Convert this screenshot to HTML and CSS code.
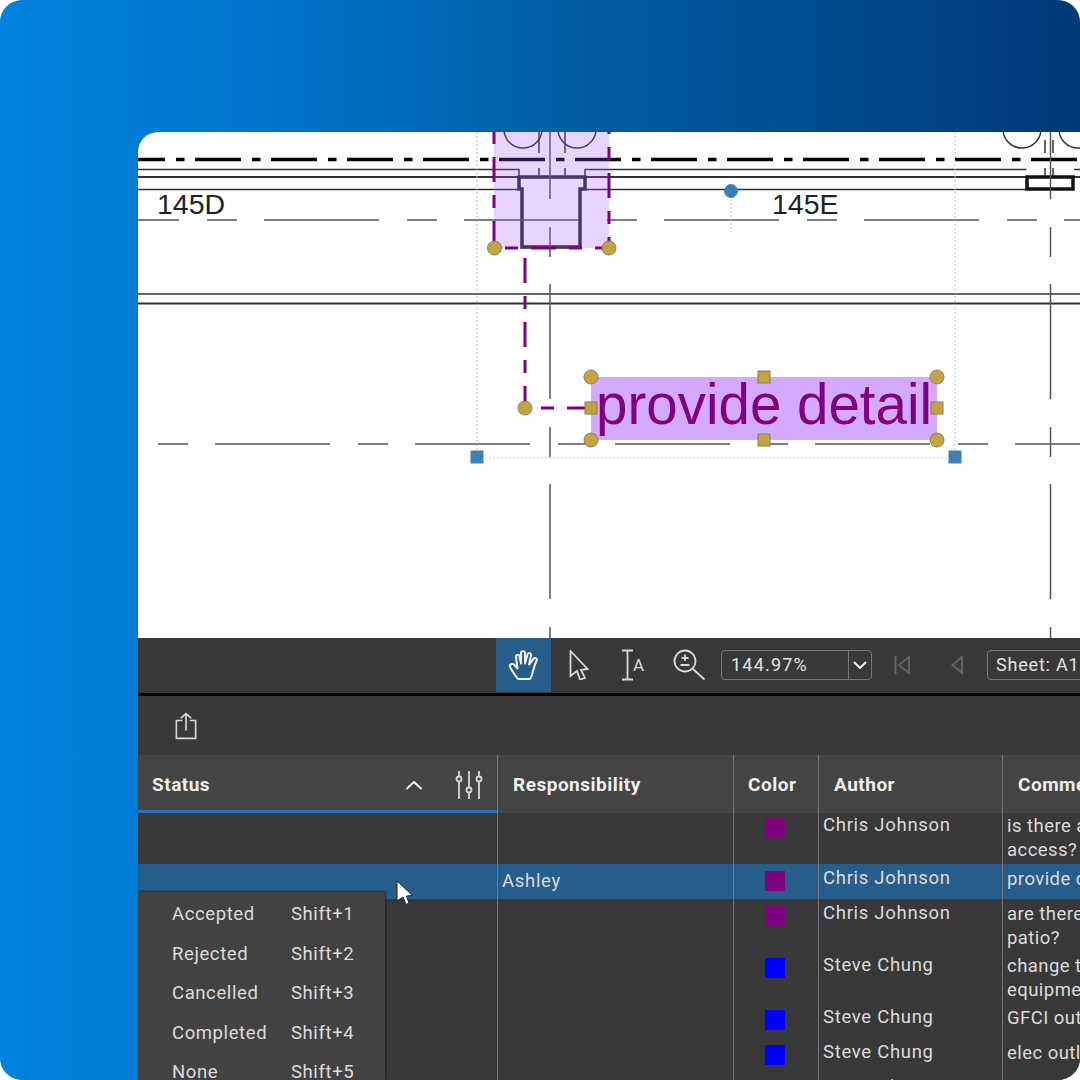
FILE: index.html
```html
<!DOCTYPE html>
<html lang="en-US">
<head>
  <meta charset="UTF-8">
  <title>Markup list</title>
  <link rel="stylesheet" href="styles.css">
</head>
<body>
<div class="frame">
  <div class="window">

    <!-- the drawing: viewBox uses page coordinates -->
    <svg class="drawing" viewBox="138 132 942 506">
      <g class="thin">
        <path d="M138 169.500H519V177M585 177V169.500H1026.500M1074 169.500H1080"/>
        <path d="M138 189.500H519M585 189.500H1026"/>
        <path d="M138 294H1080"/>
        <path d="M539 132V153M565 132V153M539 168V176M565 168V176M1045 140V153M1053 140V153M1045 168V176M1053 168V176"/>
        <circle cx="523" cy="129" r="19"/>
        <circle cx="577" cy="129" r="19"/>
        <circle cx="1022" cy="129" r="19"/>
        <circle cx="1078" cy="129" r="19"/>
      </g>
      <path class="thick-chain" d="M119 159.500H1080"/>
      <path class="mid" d="M138 177H519M585 177H1026M1074 177H1080M138 303.500H1080"/>
      <path class="wall" d="M519 177V189H522V247H580V189H585V177Z"/>
      <path class="wall-black" d="M1027 177H1073V189H1027Z"/>
      <g class="grid-line">
        <path d="M64 220H1080"/>
        <path d="M15 444H1080"/>
        <path d="M550 84V638"/>
        <path d="M1050.500 84V638"/>
      </g>
      <text class="room" x="157" y="214">145D</text>
      <text class="room" x="772" y="214">145E</text>

      <rect class="cloud-fill" x="494" y="132" width="115" height="116"/>
      <path class="cloud-line" d="M609 109V248H494V132"/>
      <path class="cloud-line" d="M525 258V408H590"/>

      <g class="guide-grey"><path d="M477 132V457"/></g>
      <g class="guide-blue"><path d="M955 132V457M731 191V232"/></g>
      <path class="guide-dots" d="M477 458H955"/>

      <rect class="label-fill" x="591" y="377" width="346" height="63"/>
      <text class="label-text" x="596" y="424">provide detail</text>

      <g class="handle">
        <circle cx="494.500" cy="248" r="7"/>
        <circle cx="609" cy="248" r="7"/>
        <circle cx="525" cy="408" r="7"/>
        <circle cx="591" cy="377" r="7"/>
        <circle cx="591" cy="440" r="7"/>
        <circle cx="937" cy="377" r="7"/>
        <circle cx="937" cy="440" r="7"/>
        <rect x="585" y="402" width="12" height="12"/>
        <rect x="758" y="371" width="12" height="12"/>
        <rect x="758" y="434" width="12" height="12"/>
        <rect x="931" y="402" width="12" height="12"/>
      </g>
      <g class="handle-blue">
        <circle cx="731" cy="191" r="6.500"/>
        <rect x="471" y="451" width="12" height="12"/>
        <rect x="949" y="451" width="12" height="12"/>
      </g>
    </svg>

    <div class="toolbar">
      <div class="tool tool-active">
        <svg width="32" height="34" viewBox="0 0 32 34" class="ico">
          <path d="M10 31C7 27 3 22 2 18.500C1.500 16 4.500 15 6.500 17L9.500 20.500L8 9C7.700 6.500 11 6 11.500 8.500L13 15.500V5C13 2.500 17 2.500 17 5V15.500L19.500 6.500C20 4 23.500 5 23 7.500L21 16.500L25.500 11C27 9 30 10.500 28.500 13C26.500 17 25.500 21 24.500 25C24 28 23 29.500 22 31Z"/>
        </svg>
      </div>
      <div class="tool tool-pointer">
        <svg width="20" height="30" viewBox="0 0 20 30" class="ico-thin">
          <path d="M1.500 1L18.500 19L12 20L16 28L11 29.500L8 21L1.500 26Z"/>
        </svg>
      </div>
      <div class="tool tool-text">
        <svg width="26" height="32" viewBox="0 0 26 32" class="ico-thin">
          <path d="M1 1.500H12M1 30.500H12M6.500 1.500V30.500"/>
          <text class="ico-letter" x="12" y="22">A</text>
        </svg>
      </div>
      <div class="tool tool-zoom">
        <svg width="33" height="32" viewBox="0 0 33 32" class="ico-thin">
          <circle cx="12" cy="12" r="10.500"/>
          <path d="M20 20L31.500 30.500M12 5.500V12M8.500 9H15.500M7.500 16H16.500"/>
        </svg>
      </div>
      <div class="combo">
        <span class="combo-value">144.97%</span>
        <span class="combo-arrow">
          <svg width="14" height="9" viewBox="0 0 14 9" class="ico"><path d="M1.500 1.500L7 7L12.500 1.500"/></svg>
        </span>
      </div>
      <svg class="nav-first ico-dim" width="16" height="20" viewBox="0 0 16 20">
        <path d="M1.500 1V19M15 2L5 10L15 18Z"/>
      </svg>
      <svg class="nav-prev ico-dim" width="12" height="20" viewBox="0 0 12 20">
        <path d="M11 2L1.500 10L11 18Z"/>
      </svg>
      <div class="sheet">Sheet: A1</div>
    </div>

    <div class="divider"></div>

    <div class="actions">
      <svg width="22" height="28" viewBox="0 0 24 30" class="ico-thin">
        <path d="M8 9H1.500V28.500H22.500V9H16M12 20V1.500M6.500 6.500L12 1.500L17.500 6.500"/>
      </svg>
    </div>

    <div class="table">
      <div class="row head">
        <div class="cell cell-status">
          <span>Status</span>
          <svg class="sort-up ico" width="16" height="10" viewBox="0 0 16 10"><path d="M1 8.500L8 2L15 8.500"/></svg>
          <svg class="filter ico-thin" width="28" height="28" viewBox="0 0 28 28">
            <path d="M4 0V5.500M4 10.500V28M14 0V16.500M14 21.500V28M24 0V5.500M24 10.500V28"/>
            <circle cx="4" cy="8" r="2.500"/>
            <circle cx="14" cy="19" r="2.500"/>
            <circle cx="24" cy="8" r="2.500"/>
          </svg>
        </div>
        <div class="cell">Responsibility</div>
        <div class="cell cell-color">Color</div>
        <div class="cell">Author</div>
        <div class="cell">Comments</div>
      </div>

      <div class="row row-first">
        <div class="cell"></div>
        <div class="cell"></div>
        <div class="cell"><i class="swatch purple"></i></div>
        <div class="cell">Chris Johnson</div>
        <div class="cell note">is there any<br>access?</div>
      </div>
      <div class="row row-short row-selected">
        <div class="cell"></div>
        <div class="cell person">Ashley</div>
        <div class="cell"><i class="swatch purple"></i></div>
        <div class="cell">Chris Johnson</div>
        <div class="cell note">provide detail</div>
      </div>
      <div class="row">
        <div class="cell"></div>
        <div class="cell"></div>
        <div class="cell"><i class="swatch purple"></i></div>
        <div class="cell">Chris Johnson</div>
        <div class="cell note">are there any<br>patio?</div>
      </div>
      <div class="row">
        <div class="cell"></div>
        <div class="cell"></div>
        <div class="cell"><i class="swatch blue"></i></div>
        <div class="cell">Steve Chung</div>
        <div class="cell note">change the<br>equipment</div>
      </div>
      <div class="row row-short">
        <div class="cell"></div>
        <div class="cell"></div>
        <div class="cell"><i class="swatch blue"></i></div>
        <div class="cell">Steve Chung</div>
        <div class="cell note">GFCI outlet</div>
      </div>
      <div class="row row-short">
        <div class="cell"></div>
        <div class="cell"></div>
        <div class="cell"><i class="swatch blue"></i></div>
        <div class="cell">Steve Chung</div>
        <div class="cell note">elec outlet</div>
      </div>
      <div class="row">
        <div class="cell"></div>
        <div class="cell"></div>
        <div class="cell"><i class="swatch blue"></i></div>
        <div class="cell">Steve Chung</div>
        <div class="cell note">add outlet</div>
      </div>
    </div>

    <ul class="menu">
      <li><span>Accepted</span><span>Shift+1</span></li>
      <li><span>Rejected</span><span>Shift+2</span></li>
      <li><span>Cancelled</span><span>Shift+3</span></li>
      <li><span>Completed</span><span>Shift+4</span></li>
      <li><span>None</span><span>Shift+5</span></li>
    </ul>

    <svg class="cursor" width="18" height="26" viewBox="0 0 18 26">
      <path d="M1 1L16.500 15.500L10.500 16L13 23L10 24.500L7 17L1 21Z"/>
    </svg>
  </div>
</div>
</body>
</html>
```

FILE: styles.css
```css
html, body {
  margin: 0;
  padding: 0;
  background: #fff;
}

.frame {
  width: 1080px;
  height: 1080px;
  box-sizing: border-box;
  padding: 132px 0 0 138px;
  border-radius: 22px;
  overflow: hidden;
  background: linear-gradient(90deg, #0082de 0%, #007ad2 18%, #00589c 60%, #003a78 100%);
  font-family: Roboto, "Liberation Sans", sans-serif;
}

.window {
  position: relative;
  width: 942px;
  height: 948px;
  border-top-left-radius: 20px;
  overflow: hidden;
  background: #383838;
}

/* drawing */

.drawing {
  display: block;
  width: 942px;
  height: 506px;
  background: #fff;
}
.drawing path, .drawing circle {
  fill: none;
}
.thin path, .thin circle {
  stroke: #333;
  stroke-width: 1.500;
}
.thick-chain {
  stroke: #000;
  stroke-width: 3.500;
  stroke-dasharray: 46 11 8.500 10.500;
}
.mid {
  stroke: #333;
  stroke-width: 2;
}
.drawing .wall {
  stroke: #2a2a2a;
  stroke-width: 3.500;
}
.drawing .wall-black {
  stroke: #111;
  stroke-width: 3.500;
}
.grid-line path {
  stroke: #555;
  stroke-width: 1.500;
  stroke-dasharray: 115 28 30 27;
}
.room {
  font-family: "Liberation Sans", Arial, sans-serif;
  font-size: 28.500px;
  fill: #222;
}
.cloud-fill {
  fill: #a855ff;
  opacity: .25;
}
.cloud-line {
  stroke: #800080;
  stroke-width: 3;
  stroke-dasharray: 25 13 13 13;
}
.guide-grey path {
  stroke: #bbb;
  stroke-width: 1;
  stroke-dasharray: 2 2;
}
.guide-blue path {
  stroke: #a5cfe6;
  stroke-width: 1;
  stroke-dasharray: 2 2;
}
.guide-dots {
  stroke: #ccc;
  stroke-width: 1;
  stroke-dasharray: 2 2;
}
.label-fill {
  fill: #d4aaff;
}
.label-text {
  font-family: "Liberation Sans", Arial, sans-serif;
  font-size: 56.500px;
  fill: #800080;
}
.handle circle, .handle rect {
  fill: #c4a440;
  stroke: #8e7f55;
  stroke-width: 1;
}
.handle-blue circle, .handle-blue rect {
  fill: #3d80b8;
  stroke: #4a7fa8;
  stroke-width: 1;
}

/* toolbar */

.toolbar {
  display: flex;
  align-items: center;
  box-sizing: border-box;
  height: 55px;
  padding: 0 0 1px 358px;
  background: #383838;
  color: #e2e2e2;
}
.toolbar > * {
  flex-shrink: 0;
}
.tool {
  display: flex;
  align-items: center;
  justify-content: center;
  height: 54px;
}
.tool-active {
  width: 55px;
  background: #275d8b;
}
.tool-pointer {
  margin-left: 18px;
}
.tool-text {
  margin-left: 32px;
}
.tool-zoom {
  margin-left: 26px;
}
.ico {
  fill: none;
  stroke: #f0f0f0;
  stroke-width: 2;
  stroke-linejoin: round;
  stroke-linecap: round;
}
.ico-thin {
  fill: none;
  stroke: #d8d8d8;
  stroke-width: 1.800;
}
.ico-letter {
  font-size: 17px;
  fill: #d8d8d8;
  stroke: none;
}
.ico-dim {
  fill: none;
  stroke: #626262;
  stroke-width: 2;
}
.combo {
  display: flex;
  box-sizing: border-box;
  width: 151px;
  height: 30px;
  margin-left: 15px;
  border: 1.500px solid #777;
  border-radius: 4px;
  font-size: 18px;
  line-height: 27px;
}
.combo-value {
  flex: 1;
  padding-left: 9px;
  letter-spacing: 1.200px;
}
.combo-arrow {
  display: flex;
  align-items: center;
  justify-content: center;
  width: 22px;
  border-left: 1.500px solid #777;
}
.nav-first {
  margin-left: 22px;
}
.nav-prev {
  margin-left: 41px;
}
.sheet {
  box-sizing: border-box;
  width: 120px;
  height: 30px;
  margin-left: 24px;
  padding-left: 8px;
  border: 1.500px solid #777;
  border-radius: 4px;
  font-size: 18px;
  line-height: 27px;
  letter-spacing: .8px;
  white-space: nowrap;
}
.divider {
  height: 3px;
  background: #000;
}
.actions {
  display: flex;
  align-items: center;
  height: 59px;
  padding-left: 37px;
  background: #393939;
}

/* table */

.row {
  display: grid;
  grid-template-columns: 360px 236px 85px 184px 1fr;
  height: 52px;
  color: #dcdcdc;
  font-size: 18.500px;
  line-height: 24px;
  letter-spacing: .7px;
}
.row-first {
  height: 51px;
}
.row-short {
  height: 35px;
}
.row-selected {
  background: #275d8b;
}
.cell {
  box-sizing: border-box;
  padding: 2px 0 0 4px;
  border-right: 1px solid #777;
  white-space: nowrap;
}
.row-first .cell {
  padding-top: 0;
}
.note {
  padding-top: 3px;
  border-right: 0;
  letter-spacing: .45px;
}
.row-first .note {
  padding-top: 1px;
}
.person {
  padding-top: 5px;
}
.head {
  grid-template-rows: 58px;
  height: 58px;
  background: #444;
  color: #f0f0f0;
  font-weight: 700;
  font-size: 19px;
  line-height: 60px;
  letter-spacing: .5px;
}
.head .cell {
  padding: 0 0 0 15px;
}
.head .cell-color {
  padding-left: 14px;
}
.head .cell-status {
  display: flex;
  align-items: center;
  padding: 5px 0 0 14px;
  border-bottom: 3px solid #2a72b5;
  line-height: 24px;
}
.sort-up {
  margin-left: auto;
}
.filter {
  margin: 0 14px 0 33px;
}
.swatch {
  display: block;
  width: 20px;
  height: 20px;
  margin: 5px 0 0 27px;
}
.purple {
  background: #800080;
}
.blue {
  background: #0000ff;
}

/* context menu */

.menu {
  position: absolute;
  left: 0;
  top: 760px;
  width: 247px;
  height: 188px;
  margin: 0;
  padding: 3px 0 0 34px;
  box-sizing: border-box;
  list-style: none;
  background: #424242;
  box-shadow: 1px -1px 2px rgba(0,0,0,.5);
  color: #dcdcdc;
  font-size: 18.500px;
  letter-spacing: .6px;
}
.menu li {
  display: flex;
  height: 39.500px;
  line-height: 39.500px;
}
.menu li span:first-child {
  width: 119px;
}

.cursor {
  position: absolute;
  left: 258px;
  top: 748px;
}
.cursor path {
  fill: #fff;
  stroke: #222;
  stroke-width: 1;
}
```
